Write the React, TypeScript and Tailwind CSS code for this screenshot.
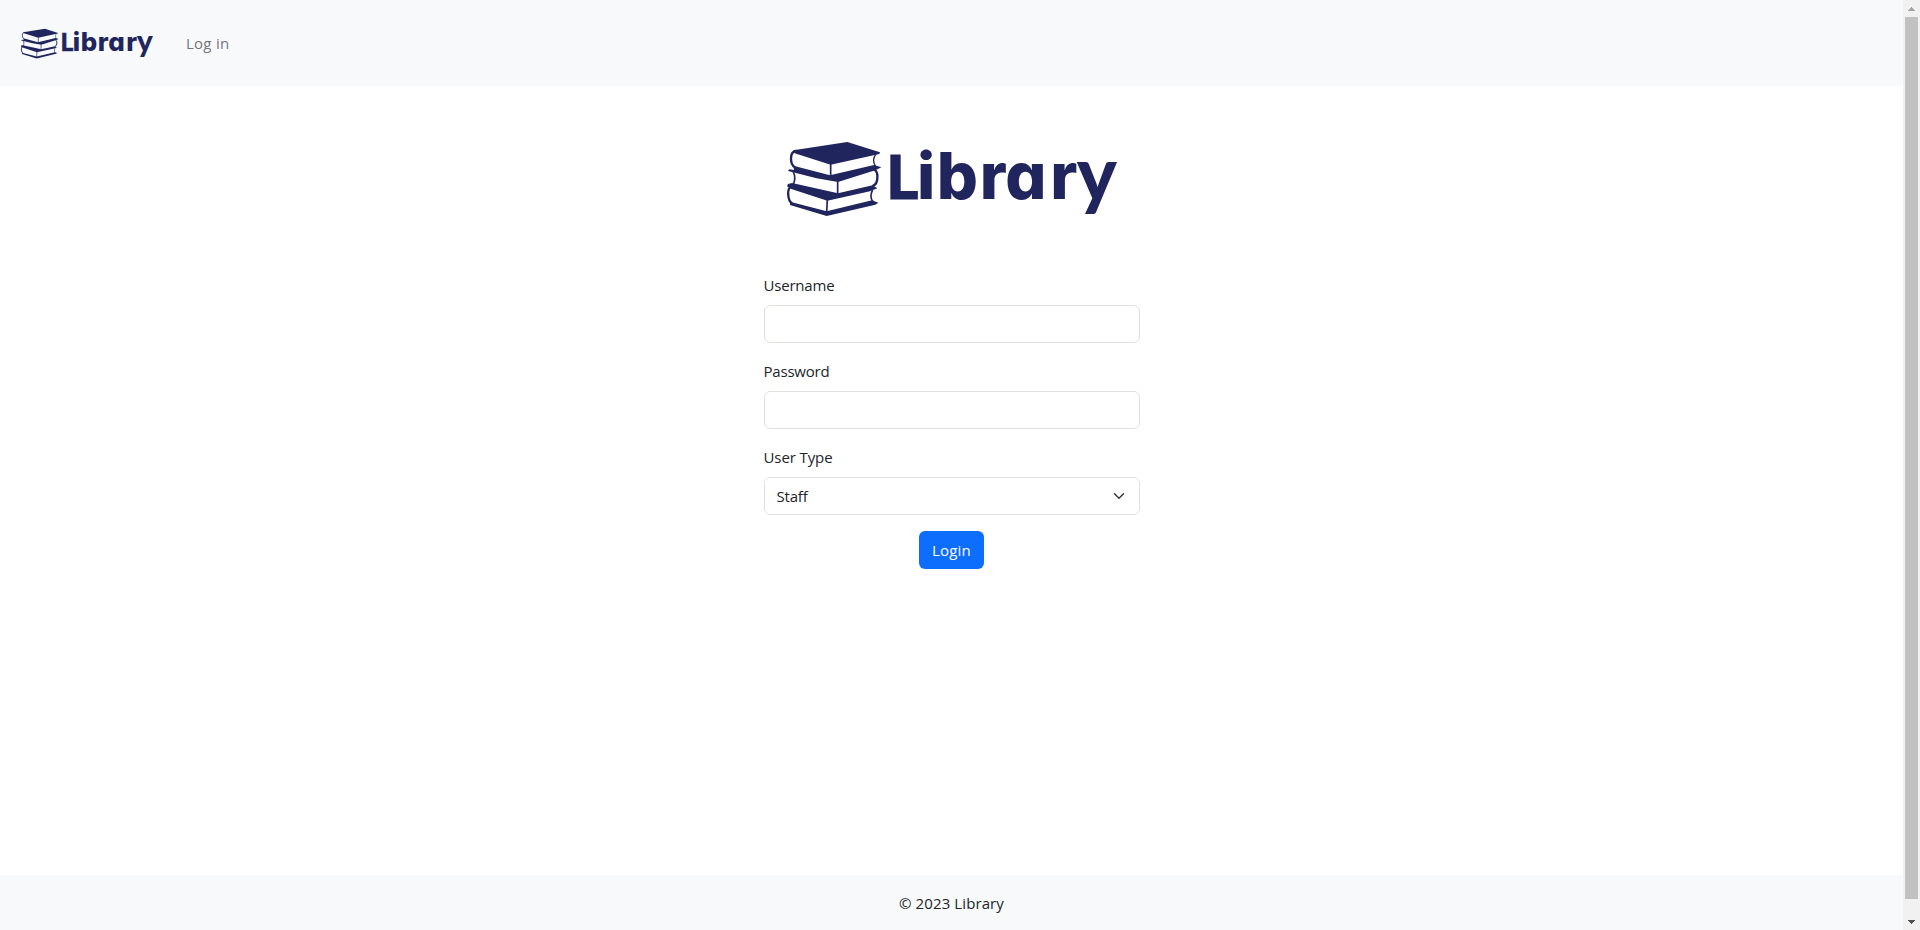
function Logo({ className }: { className: string }) {
  return (
    <svg viewBox="0 0 1080 300" className={`overflow-visible ${className}`} role="img" aria-label="Library">
      <g fill="#20255e" stroke="none">
        <path d="M70 61 L232 36 L330 67 L328 72 L182 104 L74 70 Z" />
        <path d="M70 107 L180 136 L312 105 L334 112 L318 120 L204 156 L140 145 L54 123 L58 118 L72 120 Z" />
        <path d="M66 159 L204 190 L308 166 L322 175 L300 184 L172 212 L64 177 L51 169 L54 162 Z" />
        <path d="M60 215 L170 244 L306 211 L325 218 L316 224 L170 258 L60 225 Z" />
      </g>
      <g fill="none" stroke="#20255e" strokeWidth="7" strokeLinecap="round" strokeLinejoin="round">
        <path d="M78 63 C65 64 63 74 63 86 C63 98 66 106 74 111" />
        <path d="M317 74 C309 84 309 96 316 108" strokeWidth="4" />
        <path d="M182 102 V138 M203 154 V192 M172 208 L170 248" strokeWidth="5" />
        <path d="M70 126 C76 138 76 150 70 163" strokeWidth="5" />
        <path d="M314 120 C325 125 326 160 310 167" />
        <path d="M59 173 C52 181 53 212 65 219" />
        <path d="M307 182 C302 192 301 204 308 214" strokeWidth="5" />
      </g>
      <text
        y="206"
        fill="#20255e"
        className="font-['Inter',sans-serif] text-[194px] font-extrabold [font-feature-settings:'cv11','ss03']"
      >
        <tspan
          x="349"
          stroke="#20255e"
          strokeWidth="3"
          className="font-['Lato',sans-serif] text-[184px] font-black"
        >
          L
        </tspan>
        <tspan x="441 500 629 706 841">ibrar</tspan>
        <tspan x="920" dy="6" className="font-['Lato',sans-serif] text-[226px] font-black">
          y
        </tspan>
      </text>
    </svg>
  );
}

const fieldClass =
  "block h-[38px] w-full rounded-md border border-[#dee2e6] bg-white px-3 outline-none";

function Field({ label, type }: { label: string; type: string }) {
  return (
    <label className="mb-4 block">
      <span className="mb-2 block">{label}</span>
      <input type={type} className={fieldClass} />
    </label>
  );
}

function Scrollbar() {
  return (
    <div className="flex w-[17px] shrink-0 flex-col items-center bg-[#f1f1f1]">
      <svg viewBox="0 0 17 17" className="h-[17px] w-[17px] shrink-0" shapeRendering="crispEdges">
        <path d="M8 7h1v1h1v1h1v1h1v1H5v-1h1V9h1V8h1z" fill="#a3a3a3" />
      </svg>
      <div className="h-[882px] w-[13px] bg-[#c1c1c1]" />
      <div className="flex-1" />
      <svg viewBox="0 0 17 17" className="h-[17px] w-[17px] shrink-0" shapeRendering="crispEdges">
        <path d="M5 7h7v1h-1v1h-1v1H9v1H8v-1H7V9H6V8H5z" fill="#505050" />
      </svg>
    </div>
  );
}

export default function App() {
  return (
    <div className="flex h-[930px] w-full overflow-hidden bg-white font-['Open_Sans','Noto_Sans',sans-serif] text-[15px] leading-6 tracking-[-0.2px] text-[#212529]">
      <div className="flex min-w-0 flex-1 flex-col">
        <nav className="flex h-[86px] items-center bg-[#f8f9fa] pl-[14px]">
          <Logo className="mt-0.5 h-10 w-36" />
          <a href="#" className="ml-7 tracking-[0.25px] text-[#212529]/65">
            Log in
          </a>
        </nav>
        <main className="flex flex-1 flex-col items-center">
          <Logo className="mt-11 mr-[3px] h-[100px] w-[360px]" />
          <form className="mt-[43px] flex w-[376px] flex-col">
            <Field label="Username" type="text" />
            <Field label="Password" type="password" />
            <label className="mb-4 block">
              <span className="mb-2 block tracking-[-0.1px]">User Type</span>
              <span className="relative block">
                <select className={`${fieldClass} appearance-none`}>
                  <option>Staff</option>
                </select>
                <svg
                  viewBox="0 0 16 16"
                  className="pointer-events-none absolute top-[13px] right-[13px] h-3 w-4"
                  fill="none"
                  stroke="#343a40"
                  strokeWidth="2"
                  strokeLinecap="round"
                  strokeLinejoin="round"
                >
                  <path d="m2 5 6 6 6-6" />
                </svg>
              </span>
            </label>
            <button
              type="button"
              className="h-[38px] w-[65px] self-center rounded-md bg-[#0d6efd] text-center tracking-[0.2px] text-white"
            >
              Login
            </button>
          </form>
        </main>
        <footer className="flex h-[55px] items-center justify-center bg-[#f8f9fa] tracking-[0.1px]">
          © 2023 Library
        </footer>
      </div>
      <Scrollbar />
    </div>
  );
}
